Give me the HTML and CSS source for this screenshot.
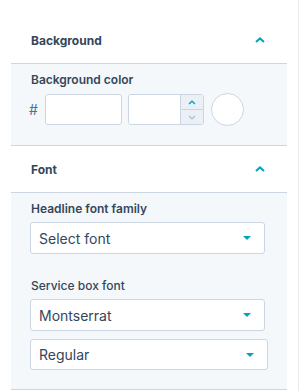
FILE: index.html
```html
<!DOCTYPE html>
<html lang="en">
<head>
    <meta charset="UTF-8">
    <title>Style settings</title>
    <link rel="stylesheet" href="styles.css">
</head>
<body>
    <div class="page">
        <div class="panel">

            <header class="panel-header">
                <span>Background</span>
                <svg class="chevron" width="10" height="6" viewBox="0 0 10 6"><path d="M1 5 L5 1.4 L9 5" fill="none" stroke="#00a4bd" stroke-width="2"/></svg>
            </header>
            <section class="panel-body">
                <label class="field-label">Background color</label>
                <div class="color-row">
                    <span class="hash">#</span>
                    <input class="text-input hex-input" type="text">
                    <div class="number-input">
                        <input class="text-input" type="text">
                        <div class="stepper">
                            <span class="step step-up"><svg width="8" height="5" viewBox="0 0 8 5"><path d="M1 4 L4 1.2 L7 4" fill="none" stroke="#00a4bd" stroke-width="1.3"/></svg></span>
                            <span class="step step-down"><svg width="8" height="5" viewBox="0 0 8 5"><path d="M1 1 L4 3.8 L7 1" fill="none" stroke="#b0c1d4" stroke-width="1.3"/></svg></span>
                        </div>
                    </div>
                    <span class="swatch"></span>
                </div>
            </section>

            <header class="panel-header">
                <span>Font</span>
                <svg class="chevron" width="10" height="6" viewBox="0 0 10 6"><path d="M1 5 L5 1.4 L9 5" fill="none" stroke="#00a4bd" stroke-width="2"/></svg>
            </header>
            <section class="panel-body">
                <label class="field-label">Headline font family</label>
                <div class="select">
                    <span>Select font</span>
                    <span class="caret"></span>
                </div>

                <label class="field-label service-label">Service box font</label>
                <div class="select">
                    <span>Montserrat</span>
                    <span class="caret"></span>
                </div>
                <div class="select select-wide">
                    <span>Regular</span>
                    <span class="caret"></span>
                </div>
            </section>

        </div>
        <div class="rule"></div>
    </div>
</body>
</html>
```

FILE: styles.css
```css
:root {
    --text: #33475b;
    --accent: #00a4bd;
    --line: #cbd6e2;
    --section-bg: #f5f8fa;
}

* {
    margin: 0;
    padding: 0;
    box-sizing: border-box;
}

body {
    background: #ffffff;
    color: var(--text);
    font-family: 'Inter', 'Noto Sans', sans-serif;
}

.page {
    display: flex;
    height: 100vh;
}

.panel {
    width: 276px;
    margin-left: 11px;
    padding-top: 17px;
}

.rule {
    width: 1px;
    margin-left: auto;
    margin-right: 2px;
    background: #e7ebef;
}

/* Collapsible section headers */
.panel-header {
    height: 47px;
    display: flex;
    align-items: center;
    justify-content: space-between;
    padding: 0 22px 0 20px;
    border-bottom: 1px solid var(--line);
    font-size: 12px;
    font-weight: 700;
}

.panel-body {
    display: flex;
    flex-direction: column;
    align-items: flex-start;
    padding: 8px 19px 19px 19px;
    background: var(--section-bg);
    border-bottom: 1px solid var(--line);
}

.field-label {
    display: block;
    padding-left: 1px;
    font-size: 12px;
    line-height: 16px;
    font-weight: 600;
}

/* Colour picker row */
.color-row {
    display: flex;
    align-items: center;
    margin-top: 5px;
}

.hash {
    width: 16px;
    margin-left: -1px;
    font-size: 14px;
    color: #516f90;
}

.text-input {
    height: 31px;
    border: 1px solid var(--line);
    border-radius: 3px;
    background: #ffffff;
    outline: none;
}

.hex-input {
    width: 77px;
}

.number-input {
    display: flex;
    width: 76px;
    height: 31px;
    margin-left: 6px;
    border: 1px solid var(--line);
    border-radius: 3px;
    overflow: hidden;
}

.number-input .text-input {
    flex: 1;
    min-width: 0;
    height: 100%;
    border: none;
    border-radius: 0;
}

.stepper {
    width: 23px;
    display: flex;
    flex-direction: column;
    border-left: 1px solid var(--line);
    background: #eaf0f6;
}

.step {
    flex: 1;
    display: flex;
    align-items: center;
    justify-content: center;
}

.step-up {
    border-bottom: 1px solid var(--line);
}

.swatch {
    width: 33px;
    height: 33px;
    margin-left: 7px;
    border: 1px solid var(--line);
    border-radius: 50%;
    background: #ffffff;
}

/* Dropdowns */
.select {
    display: flex;
    align-items: center;
    justify-content: space-between;
    width: 235px;
    height: 32px;
    margin-top: 5px;
    padding: 0 13px 0 8px;
    border: 1px solid var(--line);
    border-radius: 3px;
    background: #ffffff;
    font-size: 14px;
}

.select + .select {
    margin-top: 8px;
}

.select-wide {
    width: 238px;
    height: 31px;
}

.caret {
    width: 0;
    height: 0;
    border-left: 4px solid transparent;
    border-right: 4px solid transparent;
    border-top: 4px solid var(--accent);
}

.service-label {
    margin-top: 24px;
    font-weight: 500;
}
```
